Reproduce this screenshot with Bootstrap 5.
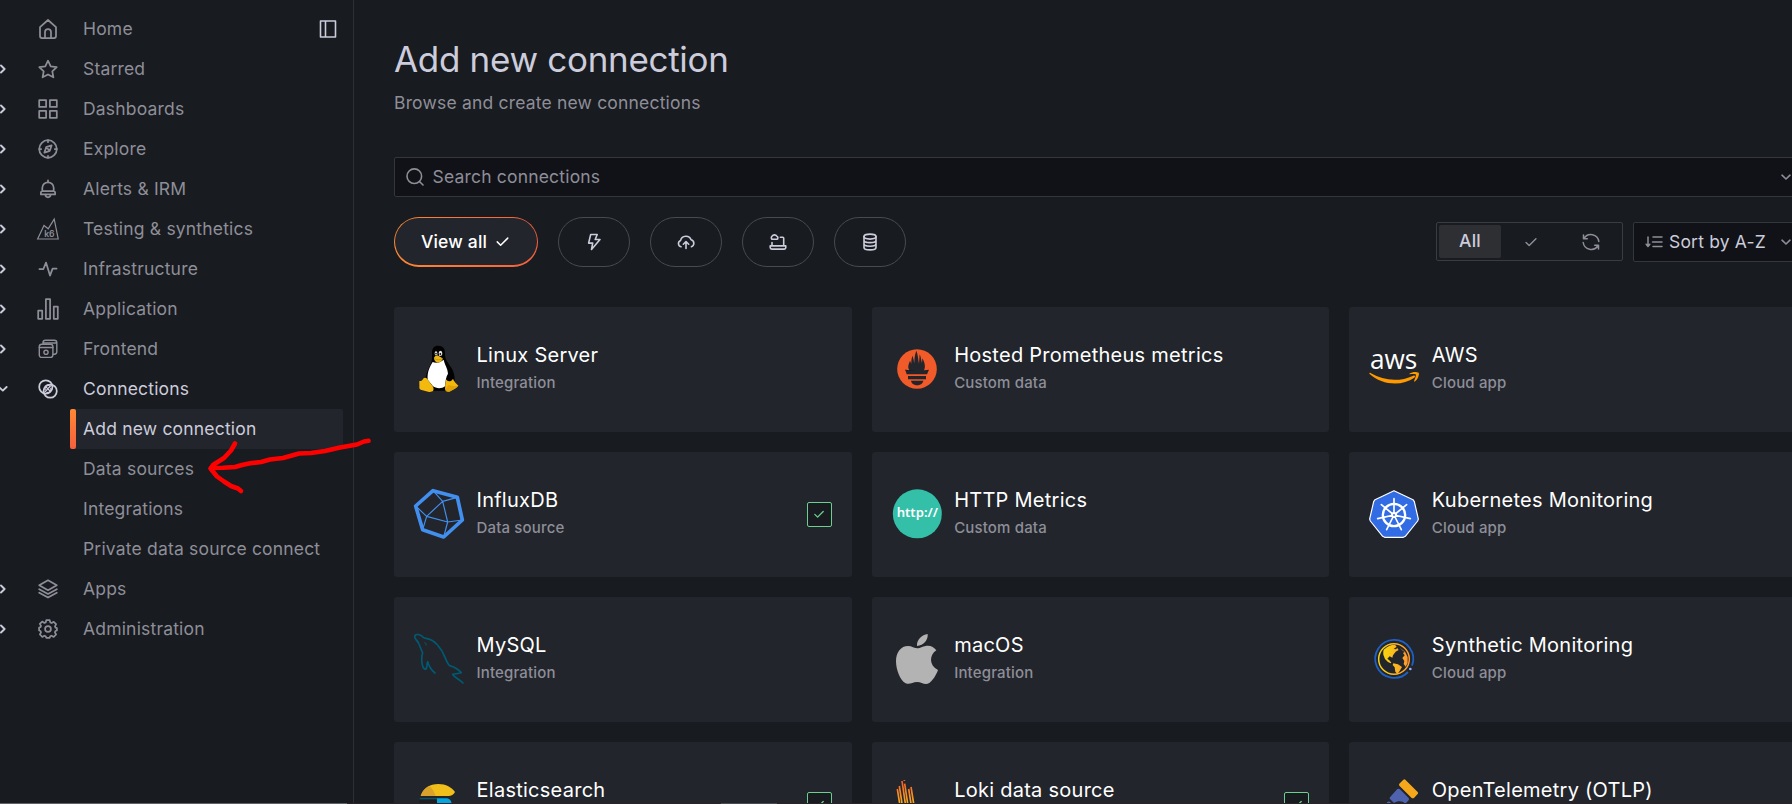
<!DOCTYPE html>
<html lang="en">
<head>
<meta charset="utf-8">
<meta name="viewport" content="width=device-width, initial-scale=1">
<title>Add new connection</title>
<link href="https://cdn.jsdelivr.net/npm/bootstrap@5.3.0/dist/css/bootstrap.min.css" rel="stylesheet">
<style>
  html, body { height: 804px; overflow: hidden; }
  body { background: #181b1f; color: #ccccdc; font-family: Inter, "Liberation Sans", sans-serif; font-size: 17.5px; line-height: 27.5px; letter-spacing: .0107em; }
  svg { display: block; flex: none; }
  .ic { width: 20px; height: 20px; fill: none; stroke: currentColor; stroke-width: 1.6; stroke-linecap: round; stroke-linejoin: round; }
  .shell { height: 804px; overflow: hidden; }
  .side { width: 354px; border-right: 1px solid #2c2f34; padding-top: 9px; color: #8e8e99; }
  .side .nav-link { height: 40px; padding: 0; color: inherit; white-space: nowrap; }
  .side .chev { width: 10px; height: 20px; margin-right: 27px; color: #ccccdc; stroke-width: 1.9; }
  .side .ic.item { width: 22px; height: 22px; margin-right: 24px; stroke-width: 1.75; }
  .side .toggle { color: #ccccdc; margin-right: 15px; }
  .side .nav-link.open { color: #ccccdc; }
  .side .sub { margin-left: 70px; margin-right: 10px; padding-left: 13px; }
  .side .sub.active { background: #22252b; color: #ccccdc; border-radius: 2px; padding-left: 0; }
  .side .sub.active::before { content: ""; width: 6px; height: 40px; margin-right: 7px; border-radius: 2px; background: linear-gradient(#ff8833, #f55f3e); }
  .content-area { width: 1413px; margin-left: 40px; padding-top: 38px; }
  h1 { font-size: 35px; line-height: 42px; font-weight: 400; letter-spacing: -.0088em; color: #ccccdc; margin: 0 0 9px; }
  .muted { color: #8e8e99; }
  .search { height: 40px; margin-top: 40px; background: #111217; border: 1px solid #34363c; border-radius: 2px; padding: 0 10px 0 10px; }
  .search span { margin: 0 auto 0 7.5px; }
  .caret { width: 12px; height: 12px; margin-right: 4px; }
  .filters { margin-top: 20px; height: 50px; gap: 20px; }
  .pill { width: 72px; height: 50px; border: 1px solid #484a50; border-radius: 25px; flex: none; }
  .pill.on { width: 144px; border: 0; background: linear-gradient(90deg, #ff8833, #f55f3e); padding: 1px 1px 2px; }
  .pill.on > span { width: 100%; height: 100%; background: #22252b; border-radius: 24px; color: #fff; font-weight: 500; padding: 1px 1px 0 0; }
  .radio-set { width: 187px; height: 39px; border: 1px solid #3a3c42; border-radius: 2px; padding: 2px; margin-left: auto; color: #8e8e99; flex: none; }
  .radio-set > span { flex: 1 1 0; height: 33px; }
  .radio-set .sel { background: #2d2f33; border-radius: 2px; color: #ccccdc; font-weight: 500; flex: 0 0 62px; padding-bottom: 1px; }
  .sorter { width: 174px; height: 40px; background: #111217; border: 1px solid #34363c; border-radius: 2px; padding: 0 10px 0 11px; margin-left: -10px; flex: none; }
  .catalog { --bs-gutter-x: 20px; --bs-gutter-y: 20px; margin-top: 20px; }
  .tile { height: 125px; background: #22252b; border-radius: 3px; padding: 0 20px; gap: 12.5px; }
  .tile svg.logo { width: 50px; height: 50px; overflow: visible; }
  .tile h2 { font-size: 20px; line-height: 24px; font-weight: 400; letter-spacing: .013em; color: #fff; margin: 0 0 5px; }
  .tile p { font-size: 15px; line-height: 22px; font-weight: 500; letter-spacing: .0107em; color: #8e8e99; margin: 0; }
  .txt { padding-bottom: 1px; }
  .catalog .col:nth-child(n+10) .txt { padding-bottom: 24px; }
  .done { width: 25px; height: 25px; border: 1px solid #6ccf8e; border-radius: 2px; background: #181b1f; color: #6ccf8e; }
  .done .ic { width: 14px; height: 14px; stroke-width: 1.9; }
  .scribble { position: absolute; left: 0; top: 0; pointer-events: none; }
  .edge { position: absolute; left: 0; top: 803px; width: 1792px; height: 1px; background: #2b2326; }
  .edge::before { content: ""; display: block; width: 347px; height: 1px; background: #606164; }
  .edge::after { content: ""; display: block; width: 56px; height: 1px; margin: -1px 0 0 721px; background: #4c4c50; }
</style>
<script src="https://cdn.jsdelivr.net/npm/bootstrap@5.3.0/dist/js/bootstrap.bundle.min.js"></script>
</head>
<body>
<svg width="0" height="0" class="position-absolute">
  <symbol id="chev" viewBox="0 0 10 20"><path d="M1 6.5 4.6 10 1 13.5"/></symbol>
  <symbol id="down" viewBox="0 0 12 12"><path d="M2 4.2 6 8l4-3.8"/></symbol>
  <symbol id="tick" viewBox="0 0 20 20"><path d="M4.5 10.5 8 14l7.5-7.5"/></symbol>
</svg>

<div class="shell d-flex">
  <nav class="side nav flex-column flex-nowrap flex-shrink-0">
    <a class="nav-link d-flex align-items-center"><svg class="ic chev"></svg>
      <svg class="ic item" viewBox="0 0 22 22"><path d="M3 9.2 11 2l8 7.2V18a2 2 0 0 1-2 2H5a2 2 0 0 1-2-2ZM8 20v-6a3 3 0 0 1 6 0v6"/></svg>Home
      <svg class="ic toggle ms-auto" viewBox="0 0 20 20"><path d="M2.5 2h15v16h-15ZM7.5 2v16"/></svg></a>
    <a class="nav-link d-flex align-items-center"><svg class="ic chev"><use href="#chev"/></svg>
      <svg class="ic item" viewBox="0 0 22 22"><path d="m11 2.7 2.7 5.6 6 .8-4.4 4.2 1.1 6L11 16.4l-5.4 2.9 1.1-6-4.4-4.2 6-.8Z"/></svg>Starred</a>
    <a class="nav-link d-flex align-items-center"><svg class="ic chev"><use href="#chev"/></svg>
      <svg class="ic item" viewBox="0 0 22 22"><path d="M2.2 2.2h6.9v6.7H2.2ZM12.9 2.2h6.9v6.7h-6.9ZM2.2 12.9h6.9v6.9H2.2ZM12.9 12.9h6.9v6.9h-6.9Z"/></svg>Dashboards</a>
    <a class="nav-link d-flex align-items-center"><svg class="ic chev"><use href="#chev"/></svg>
      <svg class="ic item" viewBox="0 0 22 22"><circle cx="11" cy="11" r="8.8"/><path d="m14.6 7.4-1.8 5.4-5.4 1.8 1.8-5.4ZM9.5 9.5l3 3M11 2.2v2M11 17.8v2M2.2 11h2M17.8 11h2"/></svg>Explore</a>
    <a class="nav-link d-flex align-items-center"><svg class="ic chev"><use href="#chev"/></svg>
      <svg class="ic item" viewBox="0 0 22 22"><path d="M11 2.4v2M5.3 13.2V10a5.7 5.7 0 0 1 11.4 0v3.2M5.2 13.2h11.6a1.4 1.4 0 0 1 1.3 1.4v1.8H3.9v-1.8a1.4 1.4 0 0 1 1.3-1.4ZM8.4 17c.4 3 4.8 3 5.2 0"/></svg>Alerts &amp; IRM</a>
    <a class="nav-link d-flex align-items-center"><svg class="ic chev"><use href="#chev"/></svg>
      <svg class="ic item overflow-visible" viewBox="0 0 22 22"><path stroke-width="1.2" stroke-linejoin="miter" d="m.6 21 6.4-13.5 4.2 3.3 6-9.6L21.2 21Z"/><text x="7.2" y="18.8" font-size="8.6" font-weight="600" letter-spacing="-.2" fill="currentColor" stroke="none">k6</text></svg>Testing &amp; synthetics</a>
    <a class="nav-link d-flex align-items-center"><svg class="ic chev"><use href="#chev"/></svg>
      <svg class="ic item" viewBox="0 0 22 22"><path d="M2.4 11h4L9 4.6 13 17.6 15.6 10.6h4"/></svg>Infrastructure</a>
    <a class="nav-link d-flex align-items-center"><svg class="ic chev"><use href="#chev"/></svg>
      <svg class="ic item overflow-visible" viewBox="0 0 22 22"><path d="M1.2 12.6h4v8.2h-4ZM8.9 1.2h4.2v19.6H8.9ZM16.8 8.6h4v12.2h-4Z"/></svg>Application</a>
    <a class="nav-link d-flex align-items-center"><svg class="ic chev"><use href="#chev"/></svg>
      <svg class="ic item" viewBox="0 0 22 22"><g stroke-width="1.4"><rect x="2.3" y="6.2" width="13.6" height="13.2" rx="2.4"/><path d="M2.3 9.5h13.6M6 6V4.6a2.4 2.4 0 0 1 2.4-2.4h9a2.4 2.4 0 0 1 2.4 2.4v9.2a2.4 2.4 0 0 1-2.4 2.4h-1.3M7 5h12.5"/><circle cx="9" cy="14.3" r="2.1"/></g></svg>Frontend</a>
    <a class="nav-link open d-flex align-items-center"><svg class="ic chev" viewBox="0 0 10 20"><path d="M-1 8 2.8 11.6 6.6 8"/></svg>
      <svg class="ic item" viewBox="0 0 22 22"><circle cx="8.8" cy="8.9" r="6.6"/><circle cx="13.2" cy="13.1" r="6.6"/><path stroke-width="1.3" d="m8.2 13.6 5.2-5.6M8.2 11.5c-.9-2.2 1.2-5 3.8-4M13.8 10.4c.9 2.2-1.2 5-3.8 4M9.4 9.4l3.4 3.4"/></svg>Connections</a>
    <a class="nav-link sub active d-flex align-items-center">Add new connection</a>
    <a class="nav-link sub d-flex align-items-center">Data sources</a>
    <a class="nav-link sub d-flex align-items-center">Integrations</a>
    <a class="nav-link sub d-flex align-items-center">Private data source connect</a>
    <a class="nav-link d-flex align-items-center"><svg class="ic chev"><use href="#chev"/></svg>
      <svg class="ic item" viewBox="0 0 22 22"><path d="m11 2.3 8.8 5-8.800 4.900-8.800-4.900ZM2.200 11.200l8.800 4.700 8.800-4.700M2.200 14.700l8.800 4.800 8.800-4.800"/></svg>Apps</a>
    <a class="nav-link d-flex align-items-center"><svg class="ic chev"><use href="#chev"/></svg>
      <svg class="ic item" viewBox="0 0 22 22"><circle cx="11" cy="11" r="2.9"/><path d="M9.3 2.2h3.4l.6 2.3 1.3.5 2.1-1.2 2.4 2.4L18 8.4l.5 1.2 1.4.5v2.4l-1.5.5-.5 1.3 1.2 2.2-2.4 2.4-2.2-1.2-1.3.5-.5 1.6H9.3l-.6-1.6-1.3-.5-2.1 1.2-2.4-2.4L4 14.3l-.5-1.3-1.4-.5v-2.9l1.4-.4L4 7.9l-1.2-2L5.2 3.6l2.2 1.3 1.3-.5Z"/></svg>Administration</a>
  </nav>

  <main class="content-area flex-shrink-0">
    <h1>Add new connection</h1>
    <div class="muted">Browse and create new connections</div>

    <div class="search d-flex align-items-center muted">
      <svg class="ic" viewBox="0 0 20 20"><circle cx="9.3" cy="9.2" r="7.3"/><path d="m14.7 14.7 3.3 3.3"/></svg>
      <span>Search connections</span>
      <svg class="ic caret"><use href="#down"/></svg>
    </div>

    <div class="filters d-flex align-items-center">
      <div class="pill on d-flex"><span class="d-flex align-items-center justify-content-center">View all<svg class="ic ms-2" viewBox="0 0 20 20" style="width:15px;height:15px;stroke-width:2"><path d="m3 10.5 4.500 4.500 9.500-9.500"/></svg></span></div>
      <div class="pill d-flex align-items-center justify-content-center"><svg class="ic" viewBox="0 0 20 20"><path d="M6.7 2.5h6.500l-2 5H16L7.500 17.500l1.200-6.400H4.600Z"/></svg></div>
      <div class="pill d-flex align-items-center justify-content-center"><svg class="ic" viewBox="0 0 20 20"><path d="M5 14.7a3.300 3.300 0 0 1-.4-6.300 5.500 5.500 0 0 1 10.500-.6 3.600 3.600 0 0 1 .3 6.900M10 16.500V9.700M7.300 12.200 10 9.500l2.700 2.700"/></svg></div>
      <div class="pill d-flex align-items-center justify-content-center"><svg class="ic" viewBox="0 0 20 20"><path d="M4 7.3a2 2 0 0 1 .1-3.100 2.700 2.700 0 0 1 4.700 0 1.700 1.700 0 0 1 .2 3.100ZM4 10.500v3.300M12.300 5.200h2.400a1 1 0 0 1 1 1v7.600M2.200 13.900h15.600v1.600a1.600 1.600 0 0 1-1.600 1.600H3.800a1.600 1.600 0 0 1-1.600-1.600Z"/></svg></div>
      <div class="pill d-flex align-items-center justify-content-center"><svg class="ic" viewBox="0 0 20 20"><ellipse cx="10" cy="4.6" rx="6" ry="2.5"/><path d="M4 4.600v10.800c0 3.300 12 3.300 12 0V4.600M4 8.200c0 3.200 12 3.200 12 0M4 11.800c0 3.200 12 3.200 12 0M6.500 10.300v.1M6.500 13.900v.1"/></svg></div>
      <div class="radio-set d-flex align-items-center">
        <span class="sel d-flex align-items-center justify-content-center">All</span>
        <span class="d-flex align-items-center justify-content-center"><svg class="ic" style="width:18px;height:18px"><use href="#tick"/></svg></span>
        <span class="d-flex align-items-center justify-content-center"><svg class="ic" viewBox="0 0 20 20" style="stroke-width:1.5;margin-left:2px"><path d="M2.500 3v3.800h3.800M3 6.500a8 8 0 0 1 14.800 3M17.500 17v-3.800h-3.800M17 13.500a8 8 0 0 1-14.800-3"/></svg></span>
      </div>
      <div class="sorter d-flex align-items-center">
        <svg class="ic muted" style="width:18px;height:18px;stroke-width:1.5" viewBox="0 0 18 18"><path d="M3 4v9M1.200 11.200 3 13.500l1.800-2.300M8 4h9M7.500 9H17M8 13.500h9"/></svg>
        <span style="margin:0 auto 0 6px">Sort by A-Z</span>
        <svg class="ic muted caret"><use href="#down"/></svg>
      </div>
    </div>

    <div class="catalog row row-cols-3">
      <div class="col"><div class="tile d-flex align-items-center">
        <svg class="logo" viewBox="72 133 150 150">
          <path fill="#020202" d="M126 158c0-12 7-20 18-20 15 0 21 9 21 22 0 17 3 21 15 38 12 16 15 33 14 45l-13 8-10 22h-45l-12-25-8-6c1-15 5-27 12-40 7-11 9-23 8-44Z"/>
          <path fill="#fff" d="M128 187c10 5 23 2 33-7 3 15 12 25 13 42-6 10-8 21-8 37-10 9-28 8-37 1l-16-20c-2-24 7-39 15-53Z"/>
          <path fill="#e8e8e8" d="M134 161a4 6 0 1 1 8 0v6h-7ZM146 161a5 7 0 1 1 11 0l-1 6-8 3Z"/>
          <circle cx="138" cy="162" r="2.5" fill="#111"/><circle cx="151" cy="163" r="2.7" fill="#111"/>
          <path fill="#e9b616" d="M132 174c3-5 9-8 14-5l12 7c1 5-7 13-14 13-6 0-12-7-12-15Z"/><path stroke="#a87a09" stroke-width="1.5" fill="none" d="M134 177c8 5 15 4 23 0"/>
          <path fill="#f4b90d" d="M88 244c5 0 9-1 11-6 4-6 11-5 15 3l14 19c7 12 0 18-11 17l-25-7c-6-3-3-9-4-17ZM168 239c5 8 15 8 21-2 3 9 9 14 16 21-4 7-15 11-24 17-7 4-16 0-16-9Z"/>
          <path fill="#d79707" opacity=".65" d="M176 255c9 5 18 5 29 3-4 7-15 11-24 17-7 4-14 1-16-5Z"/>
        </svg>
        <div class="txt"><h2>Linux Server</h2><p>Integration</p></div></div></div>
      <div class="col"><div class="tile d-flex align-items-center">
        <svg class="logo" viewBox="96 132 150 150">
          <circle cx="171" cy="207" r="59.5" fill="#f15a29"/>
          <path fill="#22252b" d="M148 210h-12l4 13h61l6-14-15 2c5-9 3-23-5-36l-1 15c-3-11-3-19-7-27l-2 28c-3-15-3-28-8-39-5 14-6 24-6 38l-5-23c-4 9-4 15-4 24l-4-9c-6 14-7 21-2 28ZM144 228h54v10h-54ZM153 242h37c-3 18-34 18-37 0Z"/>
          <path d="M136 210c10 3 18 3 31 3" stroke="#22252b" stroke-width="3"/>
        </svg>
        <div class="txt"><h2>Hosted Prometheus metrics</h2><p>Custom data</p></div></div></div>
      <div class="col"><div class="tile d-flex align-items-center">
        <svg class="logo" viewBox="117 133 150 150">
          <text x="120" y="208" font-family="Open Sans, Noto Sans, sans-serif" font-size="81" font-weight="500" letter-spacing="0" textLength="142" lengthAdjust="spacingAndGlyphs" fill="#fff">aws</text>
          <path fill="#f90" d="M118 222c0-3 2-3 5-1 38 23 86 26 127 7 5-2 7 2 3 6-38 27-98 22-135-12ZM238 222c8-5 21-6 28-3 3 6-3 20-12 27-2 0-2-2-1-4 3-7 6-15 4-18-3-2-11-1-18 0Z"/>
        </svg>
        <div class="txt"><h2>AWS</h2><p>Cloud app</p></div></div></div>

      <div class="col"><div class="tile d-flex align-items-center">
        <svg class="logo" viewBox="72 568 150 150" fill="none" stroke="#438ff0" stroke-linejoin="round">
          <path stroke-width="11" d="m129 573 73 20 15 68-56 51-63-22-21-71Z"/>
          <path stroke-width="3.5" d="m129 573 29 32 44-12M158 605l-48 45 63 17ZM158 605l15 62 44-6M173 667l-12 45M110 650l-33-31M110 650l-12 40"/>
        </svg>
        <div class="txt"><h2>InfluxDB</h2><p>Data source</p></div>
        <span class="done ms-auto d-flex align-items-center justify-content-center"><svg class="ic" viewBox="0 0 20 20"><path d="m4 10.500 4 4 8-8"/></svg></span></div></div>
      <div class="col"><div class="tile d-flex align-items-center">
        <svg class="logo" viewBox="96 568 150 150"><circle cx="172" cy="642.5" r="73.5" fill="#33bfa8"/><text x="110" y="652" font-family="Noto Sans, sans-serif" font-size="38" font-weight="600" letter-spacing="0" textLength="124" lengthAdjust="spacingAndGlyphs" fill="#fff">http://</text></svg>
        <div class="txt"><h2>HTTP Metrics</h2><p>Custom data</p></div></div></div>
      <div class="col"><div class="tile d-flex align-items-center">
        <svg class="logo" viewBox="117 567 150 150">
          <path fill="#326ce5" stroke="#fff" stroke-width="3.5" stroke-linejoin="round" d="m192 572 57 27 4 6 12 52-2 6-37 46-6 3h-56l-6-3-37-46-2-6 12-52 4-6Z"/>
          <circle cx="192" cy="645" r="33.5" fill="none" stroke="#fff" stroke-width="7"/>
          <path stroke="#fff" stroke-width="5" stroke-linecap="round" d="M192 645v-49M192 645l38-31M192 645l49 11M192 645l22 44M192 645l-22 44M192 645l-49 11M192 645l-38-31"/>
          <circle cx="192" cy="645" r="9" fill="#fff"/><circle cx="192" cy="645" r="3" fill="#326ce5"/>
        </svg>
        <div class="txt"><h2>Kubernetes Monitoring</h2><p>Cloud app</p></div></div></div>

      <div class="col"><div class="tile d-flex align-items-center">
        <svg class="logo" viewBox="72 162 150 150" fill="none" stroke="#005a73" stroke-width="5" stroke-linejoin="round" stroke-linecap="round">
          <path d="M98 218c-5-8-7-18-12-28-4-9-12-13-12-20 0-8 11-8 20-3 6 5 8 8 14 8 26 3 46 30 56 55 5 12 9 22 15 27 14 4 25 11 35 21-9 3-18 3-26 5 5 10 20 14 31 26M98 218c-4 13-3 29 0 40 5 14 12 12 13-2 0-5 0-8 2-11 4 14 11 25 22 34"/><path stroke-width="3" d="M104 188q5 1 5 7"/>
        </svg>
        <div class="txt"><h2>MySQL</h2><p>Integration</p></div></div></div>
      <div class="col"><div class="tile d-flex align-items-center">
        <svg class="logo" viewBox="96 162 150 150" fill="#b3b3b3"><path d="M203 162c2 17-12 35-32 36-2-18 15-34 32-36ZM229 211c-22 14-22 46 5 59-5 15-17 33-26 39-14 8-22-3-37-3-14 0-21 9-34 4-16-8-29-40-29-66 0-28 15-46 36-46 11 0 20 7 28 7 9 0 18-8 32-8 10 0 19 5 25 14Z"/></svg>
        <div class="txt"><h2>macOS</h2><p>Integration</p></div></div></div>
      <div class="col"><div class="tile d-flex align-items-center">
        <svg class="logo" viewBox="117 162 150 150">
          <defs><linearGradient id="sun"><stop stop-color="#f5d50d"/><stop offset="1" stop-color="#ff9830"/></linearGradient></defs>
          <path fill="none" stroke="#1f60c4" stroke-width="5.5" d="M234 276a57 57 0 1 1 12-19"/><circle cx="241" cy="267" r="4" fill="#8ab8ff"/>
          <circle cx="192" cy="237" r="46" fill="none" stroke="url(#sun)" stroke-width="4.5"/>
          <path fill="url(#sun)" d="M163 208c8-9 19-14 32-14l5 6-9 7 8 1 2-5 5 7-9 5-8 11-2 7-8-4-7 7 6 5 6 7-2 2-8-4-9-9-5-13c0-7-1-10 2-16ZM190 250l14 3 12 8-7 12-7 9-6-7-2-13-6-7ZM209 203l16 12 8 16v18l-6 11-6-8 2-9-6-9 7-8-5-7 5-3-7-5Z"/>
        </svg>
        <div class="txt"><h2>Synthetic Monitoring</h2><p>Cloud app</p></div></div></div>

      <div class="col"><div class="tile d-flex align-items-center">
        <svg class="logo" viewBox="72 597 150 150"><path fill="#f0bf1a" d="M92 648c7-22 27-36 53-36 23 0 40 10 50 24-4 8-11 12-19 12Z"/><path fill="#d9a22a" d="M92 648c4-13 13-25 25-30 11 7 15 17 20 30Z"/><path fill="#1e1e20" d="M89 657h52v34H86Z"/><path fill="#0c566a" d="M89 654h52v4H89Z"/><path fill="#07a5de" d="M141 655h30c10 2 14 9 14 18h-44Z"/></svg>
        <div class="txt"><h2>Elasticsearch</h2></div>
        <span class="done ms-auto d-flex align-items-center justify-content-center"><svg class="ic" viewBox="0 0 20 20"><path d="m4 10.500 4 4 8-8"/></svg></span></div></div>
      <div class="col"><div class="tile d-flex align-items-center">
        <svg class="logo" viewBox="96 597 150 150" fill="none" stroke-width="5"><defs><linearGradient id="ember" gradientUnits="userSpaceOnUse" x1="0" y1="600" x2="0" y2="690"><stop stop-color="#f15b2a"/><stop offset="1" stop-color="#fbc01e"/></linearGradient></defs>
          <path stroke="url(#ember)" d="m112 627 8 50M118 618l9 59M126 603l11 74M134 611l10 66M146 627l8 50M153 621l9 56M133 600v3"/></svg>
        <div class="txt"><h2>Loki data source</h2></div>
        <span class="done ms-auto d-flex align-items-center justify-content-center"><svg class="ic" viewBox="0 0 20 20"><path d="m4 10.500 4 4 8-8"/></svg></span></div></div>
      <div class="col"><div class="tile d-flex align-items-center">
        <svg class="logo" viewBox="117 597 150 150"><path fill="#f5a81c" d="m208 611 12-12q3-2 6 0l37 37q3 3 0 6l-11 12q-4 2-7 0l-37-37q-2-3 0-6Z"/><path fill="#4f62ad" d="m180 652 22-25q4-2 7 0l27 27q2 4 0 7l-10 10c-8-9-23-10-34-2l-12-12q-2-2 0-5ZM171 667q6-5 11 0v8h-11Z"/></svg>
        <div class="txt"><h2>OpenTelemetry (OTLP)</h2></div></div></div>
    </div>
  </main>
</div>

<svg class="scribble" width="400" height="520" fill="none" stroke="#f00" stroke-width="4.6" stroke-linecap="round" stroke-linejoin="round">
  <path d="M368.500 440.800 364 441.500 357 444.500 340 447.500 325 451 311 453 299 453.500 283 458 270 459.500 261 462 250 463.300 242 465 235 467 223 467.800 211 468"/>
  <path d="M235 443.500 231 450.500 224 458 213 465 210.500 468.500 217 476.500 224 481.500 231 486 238 488.500 241 491"/>
</svg>
<div class="edge"></div>
</body>
</html>
